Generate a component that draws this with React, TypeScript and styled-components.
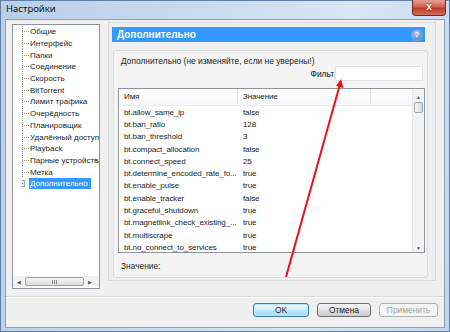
import React from "react";
import styled, { createGlobalStyle, css } from "styled-components";

const GlobalStyle = createGlobalStyle`
  body {
    margin: 0;
    font-family: "Liberation Sans", Arial, sans-serif;
    font-size: 8.4px;
    color: #1e1e1e;
  }
`;

const Window = styled.div`
  position: relative;
  width: 450px;
  height: 332px;
  display: flex;
  flex-direction: column;
  overflow: hidden;
  background: linear-gradient(100deg, #b9cfe8 0%, #c9dbef 40%, #d9e6f4 70%, #c3d6ec 100%);
  box-shadow: inset 0 0 0 1px #5f7fa6;
`;

const TitleBar = styled.div`
  height: 20px;
  display: flex;
  justify-content: space-between;
  align-items: flex-start;
  padding-left: 6px;
`;

const Title = styled.span`
  font-family: "Noto Sans", sans-serif;
  font-size: 9.5px;
  line-height: 18px;
  color: #111;
`;

const CloseButton = styled.div`
  width: 32px;
  height: 15px;
  margin-right: 4px;
  border: 1px solid #6b2a26;
  border-top: none;
  border-radius: 0 0 4px 4px;
  background: linear-gradient(#e8a093 0%, #d2614f 45%, #c0392b 55%, #d0705c 100%);
  color: #fff;
  font-weight: bold;
  font-size: 10px;
  line-height: 13px;
  text-align: center;
  text-shadow: 0 0 2px #5a1a12;
`;

const Client = styled.div`
  flex: 1;
  margin: 0 6px 5px;
  background: #f0f0f0;
  display: flex;
  flex-direction: column;
  box-shadow: 0 0 0 1px #8aa2bf;
`;

const MainRow = styled.div`
  height: 276px;
  display: flex;
  gap: 8px;
  padding: 4px 0 0 6px;
  box-sizing: border-box;
`;

const TreeBox = styled.div`
  width: 88px;
  height: 265px;
  box-sizing: border-box;
  border: 1px solid #8e949c;
  background: #fff;
  display: flex;
  flex-direction: column;
  font-size: 8px;
`;

const TreeList = styled.div`
  flex: 1;
  padding: 1px 0 0 9px;
`;

const TreeItem = styled.div`
  height: 11.7px;
  display: flex;
  align-items: center;
  white-space: nowrap;
  overflow: hidden;
`;

const Connector = styled.span`
  flex: none;
  width: 7px;
  height: 100%;
  background:
    repeating-linear-gradient(to bottom, #9a9a9a 0 1px, transparent 1px 2px) left top / 1px 100% no-repeat,
    repeating-linear-gradient(to right, #9a9a9a 0 1px, transparent 1px 2px) left center / 100% 1px no-repeat;
`;

const PlusBox = styled.span`
  flex: none;
  width: 7px;
  height: 7px;
  margin-left: -4px;
  margin-right: 4px;
  box-sizing: border-box;
  border: 1px solid #9aa3ad;
  background: linear-gradient(#fff, #e6e6e6);
  font-size: 7px;
  line-height: 5px;
  text-align: center;
  color: #333;
`;

const TreeLabel = styled.span<{ $selected?: boolean }>`
  padding: 0 1px;
  line-height: 11px;
  ${(p) =>
    p.$selected &&
    css`
      background: #3399ff;
      color: #fff;
      padding-right: 3px;
    `}
`;

const HScroll = styled.div`
  height: 11px;
  display: flex;
  align-items: center;
  background: #f2f2f2;
  margin-bottom: 1px;
`;

const ArrowBtn = styled.span`
  width: 12px;
  text-align: center;
  font-size: 5px;
  color: #505050;
`;

const HThumb = styled.span`
  width: 59px;
  height: 9px;
  border: 1px solid #a0a6ad;
  border-radius: 2px;
  box-sizing: border-box;
  background: linear-gradient(#f8f8f8, #dadada);
  display: flex;
  justify-content: center;
  align-items: center;
  gap: 1px;
`;

const Grip = styled.i`
  width: 1px;
  height: 4px;
  background: #8a8a8a;
`;

const RightPanel = styled.div`
  width: 328px;
  height: 259px;
  margin-top: -2px;
  box-sizing: border-box;
  border: 1px solid #dadada;
  padding: 4px 0 0 3px;
`;

const Header = styled.div`
  width: 313px;
  height: 15px;
  box-sizing: border-box;
  background: #3399ff;
  color: #fff;
  font-weight: bold;
  font-size: 10px;
  display: flex;
  align-items: center;
  justify-content: space-between;
  padding: 0 2px 0 5px;
`;

const HelpIcon = styled.span`
  width: 10px;
  height: 10px;
  border-radius: 50%;
  background: radial-gradient(circle at 40% 30%, #a9c6ee, #4f7fc6);
  border: 1px solid #7fa0d0;
  font-size: 7px;
  line-height: 10px;
  text-align: center;
  color: #fff;
`;

const GroupBox = styled.div`
  width: 315px;
  height: 228px;
  margin: 8px 0 0 1px;
  box-sizing: border-box;
  border: 1px solid #dcdcdc;
  border-radius: 3px;
  background: #f4f4f4;
  padding: 6px 4px 0 4px;
  display: flex;
  flex-direction: column;
`;

const Caption = styled.div`
  line-height: 9px;
  height: 9px;
  padding-left: 3px;
  white-space: nowrap;
`;

const FilterRow = styled.div`
  height: 15px;
  display: flex;
  justify-content: flex-end;
  align-items: center;
  gap: 1px;
`;

const FilterLabel = styled.span`
  color: #111;
`;

const FilterInput = styled.div`
  width: 88px;
  height: 15px;
  box-sizing: border-box;
  border: 1px solid #e3e3e3;
  background: #fff;
`;

const ListBox = styled.div`
  width: 307px;
  height: 165px;
  margin-top: 7px;
  box-sizing: border-box;
  border: 1px solid #8e949c;
  background: #fff;
  display: flex;
  font-size: 8px;
  letter-spacing: -0.1px;
`;

const ListMain = styled.div`
  flex: 1;
  overflow: hidden;
`;

const ListHeader = styled.div`
  height: 17px;
  display: flex;
  border-bottom: 1px solid #ececec;
  box-sizing: border-box;
  background: linear-gradient(#fff, #f7f8fa);
`;

const HeadCell = styled.div<{ $w: number }>`
  width: ${(p) => p.$w}px;
  flex: none;
  box-sizing: border-box;
  padding-left: 5px;
  line-height: 16px;
  border-right: 1px solid #e3e6ea;
`;

const Row = styled.div`
  height: 12.3px;
  display: flex;
  align-items: center;
`;

const Cell = styled.div<{ $w: number }>`
  width: ${(p) => p.$w}px;
  flex: none;
  box-sizing: border-box;
  padding-left: 5px;
  white-space: nowrap;
  overflow: hidden;
`;

const VScroll = styled.div`
  width: 12px;
  background: #f3f3f3;
  border-left: 1px solid #eaeaea;
  display: flex;
  flex-direction: column;
  align-items: center;
  padding-top: 4px;
  box-sizing: border-box;
`;

const VArrow = styled.span`
  font-size: 5px;
  line-height: 8px;
  color: #505050;
`;

const VThumb = styled.span`
  width: 9px;
  height: 11px;
  margin-top: 1px;
  box-sizing: border-box;
  border: 1px solid #a0a6ad;
  border-radius: 2px;
  background: linear-gradient(to right, #f8f8f8, #dadada);
  flex: none;
`;

const VSpacer = styled.span`
  flex: 1;
`;

const ValueLabel = styled.div`
  margin-top: 8px;
  line-height: 10px;
  padding-left: 3px;
`;

const Footer = styled.div`
  flex: 1;
  border-top: 1px solid #d9d9d9;
  box-shadow: inset 0 1px 0 #fff;
  display: flex;
  justify-content: flex-end;
  align-items: flex-start;
  gap: 8px;
  padding: 6px 6px 0 0;
`;

const Button = styled.button<{ $w: number; $variant?: "default" | "disabled" }>`
  width: ${(p) => p.$w}px;
  height: 14px;
  padding: 0;
  font-family: inherit;
  font-size: 8.4px;
  line-height: 12px;
  color: #1e1e1e;
  border: 1px solid #707070;
  border-radius: 3px;
  background: linear-gradient(#f2f2f2 0%, #ebebeb 50%, #dddddd 51%, #cfcfcf 100%);
  ${(p) =>
    p.$variant === "default" &&
    css`
      border-color: #3c7fb1;
      background: linear-gradient(#eaf6fd 0%, #d9f0fc 50%, #bee6fd 51%, #a7d9f5 100%);
      box-shadow: inset 0 0 0 1px #bfe5fb;
    `}
  ${(p) =>
    p.$variant === "disabled" &&
    css`
      color: #a3a3a3;
      border-color: #adb2b5;
      background: #f4f4f4;
    `}
`;

const Overlay = styled.svg`
  position: absolute;
  inset: 0;
  pointer-events: none;
`;

const treeItems = [
  "Общие",
  "Интерфейс",
  "Папки",
  "Соединение",
  "Скорость",
  "BitTorrent",
  "Лимит трафика",
  "Очерёдность",
  "Планировщик",
  "Удалённый доступ",
  "Playback",
  "Парные устройства",
  "Метка",
];

const rows: [string, string][] = [
  ["bt.allow_same_ip", "false"],
  ["bt.ban_ratio", "128"],
  ["bt.ban_threshold", "3"],
  ["bt.compact_allocation", "false"],
  ["bt.connect_speed", "25"],
  ["bt.determine_encoded_rate_fo...", "true"],
  ["bt.enable_pulse", "true"],
  ["bt.enable_tracker", "false"],
  ["bt.graceful_shutdown", "true"],
  ["bt.magnetlink_check_existing_...", "true"],
  ["bt.multiscrape", "true"],
  ["bt.no_connect_to_services", "true"],
];

const App = () => {
  return (
    <Window>
      <GlobalStyle />
      <TitleBar>
        <Title>Настройки</Title>
        <CloseButton>x</CloseButton>
      </TitleBar>
      <Client>
        <MainRow>
          <TreeBox>
            <TreeList>
              {treeItems.map((item) => (
                <TreeItem key={item}>
                  <Connector />
                  <TreeLabel>{item}</TreeLabel>
                </TreeItem>
              ))}
              <TreeItem>
                <PlusBox>+</PlusBox>
                <TreeLabel $selected>Дополнительно</TreeLabel>
              </TreeItem>
            </TreeList>
            <HScroll>
              <ArrowBtn>◀</ArrowBtn>
              <HThumb>
                <Grip />
                <Grip />
                <Grip />
              </HThumb>
              <ArrowBtn>▶</ArrowBtn>
            </HScroll>
          </TreeBox>
          <RightPanel>
            <Header>
              <span>Дополнительно</span>
              <HelpIcon>?</HelpIcon>
            </Header>
            <GroupBox>
              <Caption>Дополнительно (не изменяйте, если не уверены!)</Caption>
              <FilterRow>
                <FilterLabel>Фильт</FilterLabel>
                <FilterInput />
              </FilterRow>
              <ListBox>
                <ListMain>
                  <ListHeader>
                    <HeadCell $w={119}>Имя</HeadCell>
                    <HeadCell $w={133}>Значение</HeadCell>
                  </ListHeader>
                  {rows.map(([name, value]) => (
                    <Row key={name}>
                      <Cell $w={119}>{name}</Cell>
                      <Cell $w={133}>{value}</Cell>
                    </Row>
                  ))}
                </ListMain>
                <VScroll>
                  <VArrow>▲</VArrow>
                  <VThumb />
                  <VSpacer />
                  <VArrow>▼</VArrow>
                </VScroll>
              </ListBox>
              <ValueLabel>Значение:</ValueLabel>
            </GroupBox>
          </RightPanel>
        </MainRow>
        <Footer>
          <Button $w={56} $variant="default">OK</Button>
          <Button $w={54}>Отмена</Button>
          <Button $w={59} $variant="disabled">Применить</Button>
        </Footer>
      </Client>
      <Overlay width="450" height="332" viewBox="0 0 450 332">
        <line x1="286" y1="277" x2="339.5" y2="86" stroke="#e5131b" strokeWidth="2" />
        <polygon points="341,79 343.5,88 336,86" fill="#e5131b" />
      </Overlay>
    </Window>
  );
};

export default App;
